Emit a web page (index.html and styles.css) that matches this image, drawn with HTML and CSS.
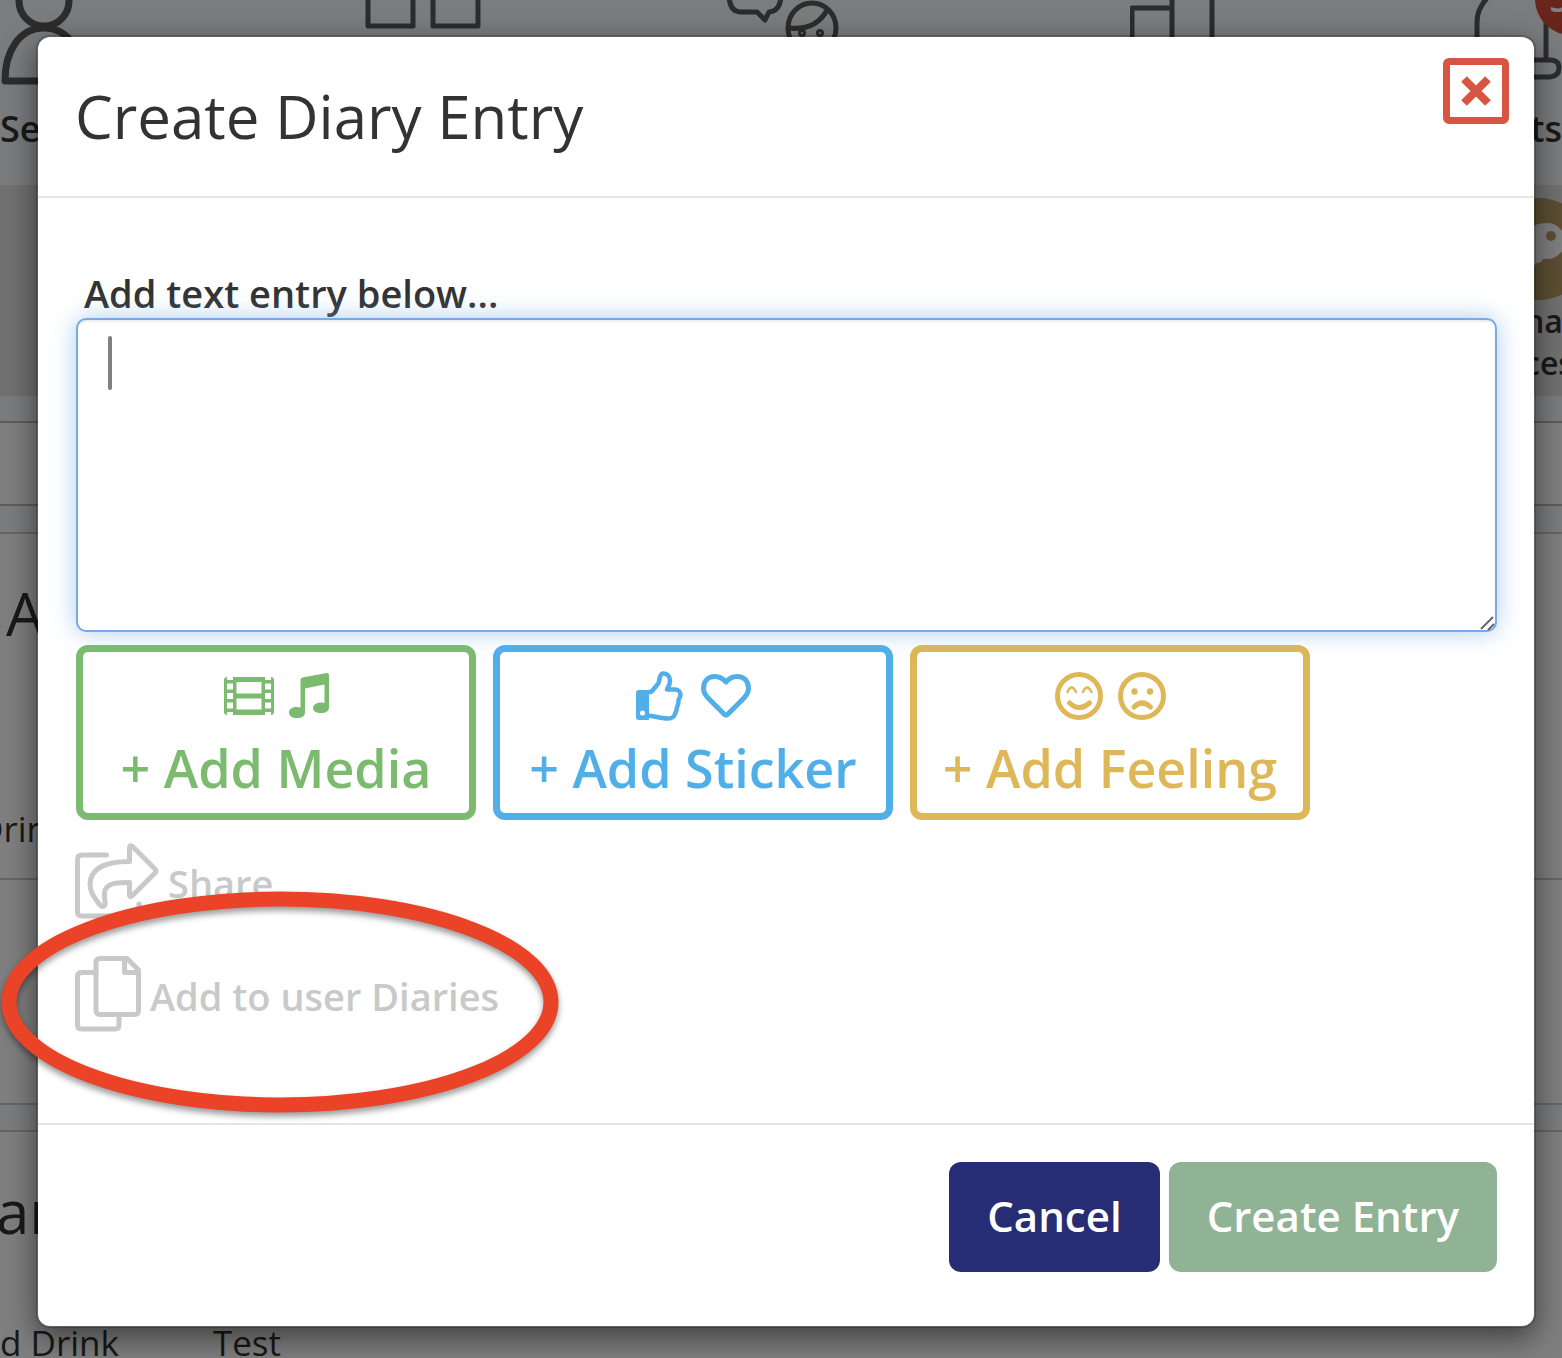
FILE: index.html
```html
<!DOCTYPE html>
<html lang="en">
<head>
  <meta charset="UTF-8">
  <meta name="viewport" content="width=device-width, initial-scale=1.0">
  <title>Create Diary Entry</title>
  <link rel="stylesheet" href="styles.css">
</head>
<body>
  <!-- Page behind the dialog -->
  <div class="page">
    <nav class="nav">
      <div class="nav-item">
        <svg class="nav-icon" width="90" height="86" viewBox="0 0 90 86"><circle cx="44" cy="1" r="25"/><path d="M5 81H84C82 50 68 28 44 28S5 50 5 81Z"/></svg>
        <span>Se</span>
      </div>
      <div class="nav-item">
        <svg class="nav-icon thin" width="118" height="86" viewBox="0 0 118 86"><path d="M3 -4V26H48V-4M68 -4V26H113V-4"/></svg>
      </div>
      <div class="nav-item">
        <svg class="nav-icon thin" width="116" height="86" viewBox="0 0 116 86"><path d="M3 -6Q3 12 15 12H31L39 20L43 12Q55 11 55 -6"/><ellipse cx="86" cy="28" rx="24" ry="25"/><path d="M62 28Q90 31 101 10"/><g stroke-width="3"><circle cx="76" cy="33" r="2.500"/><circle cx="94" cy="33" r="2.500"/></g></svg>
      </div>
      <div class="nav-item">
        <svg class="nav-icon thin" width="88" height="86" viewBox="0 0 88 86"><path d="M42 -4V84M2 84V8H42M82 -4V84"/></svg>
      </div>
      <div class="nav-item">
        <svg class="nav-icon thin" width="88" height="86" viewBox="0 0 88 86"><path d="M3 60V22Q3 8 15 -4M72 -6V60M3 60H76Q85 60 85 68T76 77H3"/></svg>
        <span class="nav-end">ts</span>
        <span class="badge">5</span>
      </div>
    </nav>
    <div class="people">
      <div class="person">
        <svg width="102" height="102" viewBox="0 0 102 102"><circle cx="51" cy="51" r="51" fill="#b89d66"/><path d="M40 30Q50 25 59 25A18 18 0 0 1 59 61H55Q54 65 48 65Q44 72 38 68Z" fill="#fff"/><circle cx="63" cy="38" r="5" fill="#b89d66"/></svg>
        <span>na</span>
        <span>ces</span>
      </div>
    </div>
    <div class="search"></div>
    <div class="card">
      <h2>A</h2>
      <p class="crumb cut">Drink</p>
    </div>
    <div class="card">
      <h2>ar</h2>
      <p class="crumb"><span>d Drink</span><span>Test</span></p>
    </div>
  </div>

  <div class="overlay">
    <form class="modal" role="dialog" aria-labelledby="modal-title">
      <div class="modal-header">
        <h1 id="modal-title">Create Diary Entry</h1>
        <button type="button" class="close" aria-label="Close">
          <svg width="34" height="34" viewBox="0 0 34 34"><path d="M5 5L29 29M29 5L5 29"/></svg>
        </button>
      </div>

      <div class="modal-body">
        <label for="entry">Add text entry below...</label>
        <div class="entry-wrap">
          <textarea id="entry"></textarea>
          <span class="caret"></span>
          <svg class="grip" width="16" height="16" viewBox="0 0 16 16"><path d="M2 14L14 2M9 15L15 9"/></svg>
        </div>

        <div class="add-buttons">
          <button type="button" class="add media">
            <span class="icons">
              <svg width="50" height="38" viewBox="0 0 50 38"><path fill="currentColor" fill-rule="evenodd" d="M2 0H3V3H9V0H41V3H47V0H48L50 2V36L48 38H47V35H41V38H9V35H3V38H2L0 36V2ZM3 6.500V12.500H9V6.500ZM3 16V22H9V16ZM3 25.500V31.500H9V25.500ZM41 6.500V12.500H47V6.500ZM41 16V22H47V16ZM41 25.500V31.500H47V25.500ZM12.500 5V16.500H37.500V5ZM12.500 21.500V32.500H37.500V21.500Z"/></svg>
              <svg width="40" height="46" viewBox="0 0 40 46"><path fill="currentColor" d="M11.500 7Q11.500 5 13.500 4.500L37.500 0Q40 0 40 2V34C40 38 37 40 32 40S24 38 24 35S27 29.500 32 29.500Q34 29.500 35.500 30V11.500L16 15.500V39C16 43 13 45 8 45S0 43 0 39.500S3 34 8 34Q10 34 11.500 34.500Z"/></svg>
            </span>
            <span>+ Add Media</span>
          </button>
          <button type="button" class="add sticker">
            <span class="icons">
              <svg class="line" width="50" height="50" viewBox="0 0 50 50"><path fill="currentColor" stroke="none" fill-rule="evenodd" d="M3 19H13V49H3Q0 49 0 46V22Q0 19 3 19ZM6.500 39.500A2.500 2.500 0 1 0 6.500 44.500A2.500 2.500 0 1 0 6.500 39.500Z"/><path stroke-width="4.500" d="M12 21H15C18 18 20 15 22 13C24 10 23 2.500 27 2.500C32 2.500 34 6 34 10C34 14 32 16 31 18.500H39C42 18.500 44.500 21 44.500 24C44.500 26 43 28 42.500 29C43 32 42 34 41 36C41 39 40 41 39 43C38 46.500 36 47.500 32 47.500C24 47.500 18 45 12 44.500"/></svg>
              <svg class="line" width="50" height="44" viewBox="0 0 50 44"><path d="M25 8C21 3.500 18 2.500 14 2.500C7 2.500 2.500 7 2.500 14.500C2.500 19 5 22 8 25L23.500 40.500Q25 42 26.500 40.500L42 25C45 22 47.500 19 47.500 14.500C47.500 7 43 2.500 36 2.500C32 2.500 29 3.500 25 8Z"/></svg>
            </span>
            <span>+ Add Sticker</span>
          </button>
          <button type="button" class="add feeling">
            <span class="icons">
              <svg class="line" width="48" height="48" viewBox="0 0 48 48"><circle cx="24" cy="24" r="21.500"/><path d="M14.500 31Q24 40 34.500 31"/><path stroke-width="2.500" d="M12.500 20Q16.500 11 21 20M28 20Q32 11 36.500 20"/></svg>
              <svg class="line" width="48" height="48" viewBox="0 0 48 48"><circle cx="24" cy="24" r="21.500"/><path d="M16 35Q24 27 32.500 35"/><g fill="currentColor" stroke="none"><circle cx="16.500" cy="19.500" r="3.200"/><circle cx="32" cy="19.500" r="3.200"/></g></svg>
            </span>
            <span>+ Add Feeling</span>
          </button>
        </div>

        <button type="button" class="option">
          <svg class="line" width="84" height="76" viewBox="0 0 84 76"><path d="M31.500 12H7Q2.500 12 2.500 16.500V69Q2.500 73 7 73H58Q64 73 64 67V61"/><path d="M54.500 18.500V5Q55 1 58 4L80 26Q82 28 80 30L58 52Q55 55 54.500 52V39.500C42 39.500 33 40 30 47C28 53 31 58 30 62Q28 65 25 62C19 55 15 49 15 42C15 24 33 18.500 54.500 18.500Z"/></svg>
          <span>Share</span>
        </button>
        <button type="button" class="option">
          <svg class="line" width="66" height="76" viewBox="0 0 66 76"><path d="M21 16.500H6.500Q2.500 16.500 2.500 20.500V69Q2.500 73 6.500 73H40Q44 73 44 69V58.500"/><path d="M25 2.500H52L63.500 14V54.500Q63.500 58.500 59.500 58.500H25Q21 58.500 21 54.500V6.500Q21 2.500 25 2.500ZM49.500 3V16.500H63"/></svg>
          <span>Add to user Diaries</span>
        </button>
      </div>

      <div class="modal-footer">
        <button type="button" class="btn cancel">Cancel</button>
        <button type="submit" class="btn create">Create Entry</button>
      </div>

      <svg class="highlight" width="562" height="232" viewBox="0 0 562 232"><ellipse cx="280" cy="113" rx="271" ry="103"/></svg>
    </form>
  </div>
</body>
</html>
```
FILE: styles.css
```css
* {
  box-sizing: border-box;
}
body {
  margin: 0;
  min-height: 100vh;
  position: relative;
  overflow: hidden;
  font-family: "Open Sans", "Noto Sans", sans-serif;
  color: #333;
  background: #f6f9fc;
}
h1, h2, p {
  margin: 0;
  font-weight: 400;
}
button {
  font-family: inherit;
  font-weight: 600;
  cursor: pointer;
}
svg {
  display: block;
  flex: none;
}

/* page behind */
.page {
  height: 100vh;
  overflow: hidden;
}
.nav {
  display: grid;
  grid-template-columns: 365fr 361fr 404fr 344fr 88fr;
  height: 185px;
  font-size: 36px;
  line-height: 50px;
  font-weight: 600;
}
.nav-item {
  position: relative;
  display: flex;
  flex-direction: column;
  gap: 18px;
}
.nav-icon {
  fill: none;
  stroke: #595959;
  stroke-width: 7;
  stroke-linejoin: round;
}
.nav-icon.thin {
  stroke-width: 5;
}
.nav-end {
  align-self: flex-end;
}
.badge {
  position: absolute;
  left: 61px;
  top: -37px;
  width: 72px;
  height: 72px;
  border-radius: 50%;
  background: #d14a36;
  color: #fff;
  font-size: 36px;
  line-height: 72px;
  padding-left: 14px;
}
.people {
  display: flex;
  justify-content: flex-end;
  height: 211px;
  padding-top: 13px;
  background: #e2e2e2;
}
.person {
  width: 74px;
  font-size: 32px;
  line-height: 42px;
  font-weight: 600;
}
.person span {
  display: block;
  padding-left: 36px;
}
.search {
  height: 85px;
  margin: 25px 0 26px;
  background: #fff;
  border: solid #bbb;
  border-width: 2px 0;
}
.card {
  height: 573px;
  margin-bottom: 25px;
  padding-top: 37px;
  background: #fff;
  border: solid #ccc;
  border-width: 2px 0;
}
.card h2 {
  padding-left: 6px;
  font-size: 60px;
  line-height: 84px;
}
.card + .card h2 {
  padding-left: 0;
  text-indent: -4px;
}
.crumb {
  display: flex;
  gap: 94px;
  padding: 65px 0 24px;
  font-size: 35px;
  line-height: 50px;
}
.cut {
  padding-top: 149px;
  text-indent: -22px;
  border-bottom: 2px solid #ccc;
}

/* dialog */
.overlay {
  position: absolute;
  inset: 0;
  padding: 35px 26px 30px 36px;
  background: rgba(0, 0, 0, 0.5);
}
.modal {
  position: relative;
  background: #fff;
  background-clip: padding-box;
  border: 2px solid rgba(0, 0, 0, 0.2);
  border-radius: 14px;
  box-shadow: 0 10px 30px rgba(0, 0, 0, 0.5);
}
.modal-header {
  display: flex;
  justify-content: space-between;
  align-items: flex-start;
  padding: 21px 25px 38px 37px;
  border-bottom: 2px solid #e5e5e5;
}
.modal-header h1 {
  padding-top: 16px;
  font-size: 60px;
  line-height: 84px;
}
.close {
  display: flex;
  align-items: center;
  justify-content: center;
  width: 66px;
  height: 66px;
  padding: 0;
  background: #fff;
  border: 7px solid #d65543;
  border-radius: 6px;
}
.close svg {
  stroke: #d65543;
  stroke-width: 8;
}
.modal-body {
  padding: 70px 37px 91px 38px;
}
.modal-body label {
  display: block;
  padding-left: 8px;
  font-size: 38px;
  line-height: 50px;
  font-weight: 600;
}
.entry-wrap {
  position: relative;
}
textarea {
  display: block;
  width: 100%;
  height: 314px;
  padding: 12px 30px;
  font: inherit;
  font-size: 38px;
  resize: none;
  outline: none;
  border: 2px solid #76abe6;
  border-radius: 10px;
  box-shadow: inset 0 2px 2px rgba(0, 0, 0, 0.08), 0 0 24px rgba(118, 171, 230, 0.6);
}
.caret {
  position: absolute;
  left: 32px;
  top: 18px;
  width: 4px;
  height: 54px;
  border-radius: 2px;
  background: #808080;
}
.grip {
  position: absolute;
  right: 2px;
  bottom: 1px;
  stroke: #666;
  stroke-width: 2;
}
.add-buttons {
  display: flex;
  gap: 17px;
  margin: 13px 0 23px;
}
.add {
  width: 400px;
  height: 175px;
  display: flex;
  flex-direction: column;
  align-items: center;
  gap: 11px;
  padding: 18px 0 0;
  font-size: 52px;
  line-height: 70px;
  background: #fff;
  border: 7px solid;
  border-radius: 12px;
}
.media {
  color: #7cbb6f;
}
.sticker {
  color: #50afe9;
}
.feeling {
  color: #deb758;
}
.icons {
  display: flex;
  align-items: center;
  gap: 15px;
  height: 52px;
}
.line {
  fill: none;
  stroke: currentColor;
  stroke-width: 5;
  stroke-linecap: round;
  stroke-linejoin: round;
}
.option {
  display: flex;
  align-items: center;
  gap: 9px;
  margin-left: -1px;
  padding: 0;
  font-size: 38px;
  line-height: 50px;
  color: #c9c9c9;
  background: none;
  border: none;
}
.option span {
  padding-top: 3px;
}
.option + .option {
  margin-top: 37px;
}
.modal-footer {
  display: flex;
  justify-content: flex-end;
  gap: 9px;
  padding: 37px 37px 54px;
  border-top: 2px solid #e5e5e5;
}
.btn {
  height: 110px;
  padding: 0 38px 4px;
  font-size: 42px;
  color: #fff;
  border: none;
  border-radius: 12px;
}
.cancel {
  background: #262d74;
}
.create {
  background: #90b295;
}

/* red ring over the diaries option */
.highlight {
  position: absolute;
  left: -38px;
  bottom: 205px;
  fill: none;
  stroke: #ea4327;
  stroke-width: 15;
  filter: drop-shadow(0 4px 3px rgba(0, 0, 0, 0.4));
}
```
